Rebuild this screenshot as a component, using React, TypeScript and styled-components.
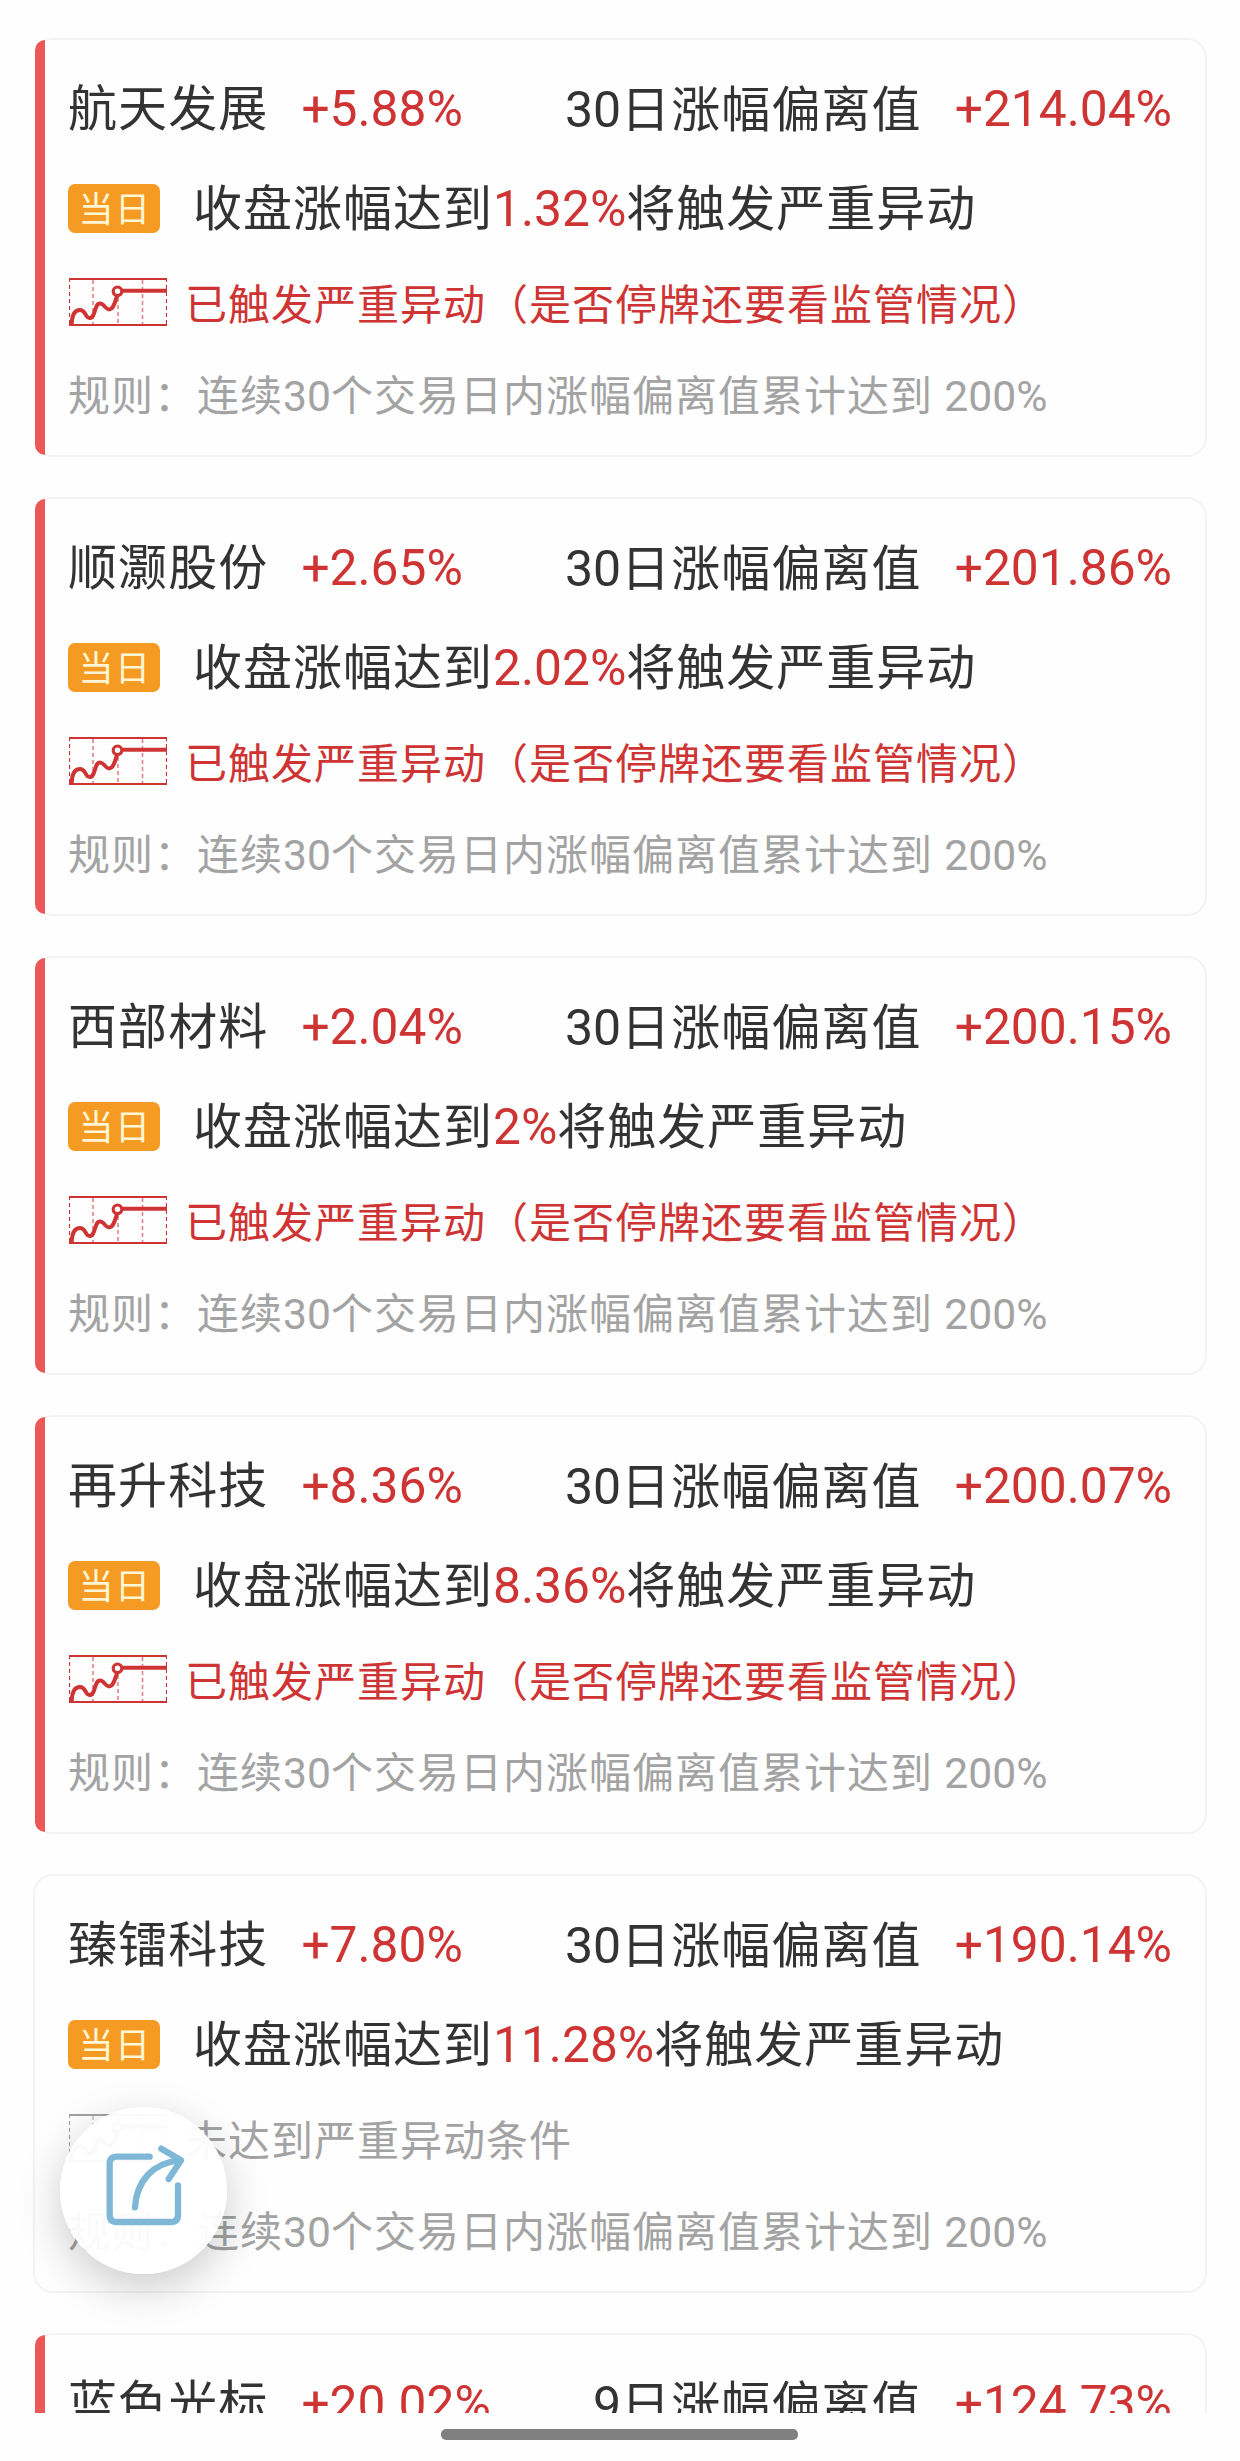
import React from "react";
import styled, { createGlobalStyle } from "styled-components";

const GlobalStyle = createGlobalStyle`
  * { box-sizing: border-box; }
  body {
    margin: 0;
    background: #fefefe;
    font-family: Roboto, "Noto Sans CJK SC", sans-serif;
    color: #333;
  }
`;

const RED = "#cf3434";
const GREY = "#a3a3a3";

const Screen = styled.main`
  position: relative;
  height: 2461px;
  overflow: hidden;
  display: flex;
  flex-direction: column;
  background: #fefefe;
`;

const List = styled.div`
  height: 2413px;
  flex: none;
  overflow: hidden;
  padding: 38px 33px 0;
  display: flex;
  flex-direction: column;
  gap: 40px;
`;

const Card = styled.section<{ $alert: boolean }>`
  position: relative;
  flex: none;
  height: 419px;
  padding: 18px 33px 0;
  border: 2px solid #f3f3f3;
  border-radius: 20px;
  ${(p) => p.$alert && `
    border-left-color: transparent;
    &::before {
      content: "";
      position: absolute;
      left: 0;
      top: 0;
      bottom: 0;
      width: 10px;
      border-radius: 10px 0 0 10px;
      background: #ec5858;
    }
  `}
`;

const Row = styled.div<{ $h: number }>`
  display: flex;
  align-items: center;
  height: ${(p) => p.$h}px;
  white-space: nowrap;
`;

const Title = styled.span`
  padding-top: 4px;
  font-size: 49px;
  letter-spacing: 1.1px;
  line-height: 60px;
`;

const Count = styled.span`
  font-size: 50px;
  letter-spacing: 0;
`;

const Figure = styled.span`
  padding-top: 2px;
  font-size: 49.7px;
  line-height: 60px;
  color: ${RED};
`;

const Change = styled(Figure)`
  margin-left: 33px;
`;

const Deviation = styled.div`
  margin-left: auto;
  display: flex;
  align-items: center;
  gap: 33px;
`;

const Badge = styled.span`
  display: flex;
  align-items: center;
  justify-content: center;
  width: 92px;
  height: 49px;
  border-radius: 7px;
  background: #f59a23;
  color: #fff6d6;
  font-size: 35px;
  letter-spacing: 1.5px;
  line-height: 49px;
  padding: 4px 0 0 2px;
`;

const Trigger = styled.span`
  padding-top: 3px;
  margin-left: 33px;
  font-size: 49px;
  letter-spacing: 1px;
  line-height: 60px;
  em {
    font-style: normal;
    font-size: 49.7px;
    letter-spacing: 0;
    color: ${RED};
  }
`;

const Status = styled.span<{ $alert: boolean }>`
  padding-top: 5px;
  margin-left: 18px;
  font-size: 42px;
  letter-spacing: 1px;
  line-height: 52px;
  color: ${(p) => (p.$alert ? RED : GREY)};
`;

const Rule = styled.span`
  padding-top: 2px;
  font-size: 42px;
  letter-spacing: 1px;
  line-height: 52px;
  color: ${GREY};
  b {
    font-weight: 400;
    font-size: 42.6px;
    letter-spacing: 0;
  }
`;

const ChartSvg = styled.svg`
  flex: none;
  width: 98px;
  height: 48px;
  margin: 0 0 2px 1px;
`;

const ShareButton = styled.button`
  position: absolute;
  left: 60px;
  top: 2107px;
  width: 167px;
  height: 167px;
  padding: 0 2px 2px 0;
  border: 0;
  border-radius: 50%;
  background: rgba(255, 255, 255, 0.95);
  box-shadow: 0 14px 44px rgba(0, 0, 0, 0.2);
  display: flex;
  align-items: center;
  justify-content: center;
`;

const ShareSvg = styled.svg`
  width: 80px;
  height: 80px;
  overflow: visible;
`;

const HomeIndicator = styled.div`
  flex: none;
  align-self: center;
  width: 357px;
  height: 11px;
  margin: 16px 1px 0 0;
  border-radius: 5px;
  background: #808080;
`;

function TrendChart({ color }: { color: string }) {
  return (
    <ChartSvg viewBox="0 0 98 48" fill="none" stroke={color}>
      <path d="M0 1H98M0 47H98" strokeWidth="2" />
      <path d="M.5 0V48M97.5 0V48" strokeWidth="1.2" strokeDasharray="4 3" />
      <path d="M24 2V46M49 20V46M73.5 2V46" strokeWidth="1.6" strokeDasharray="4 3" opacity="0.6" />
      <path
        d="M2.7 46C3 37 6 32 11 32C17 32 16 40 20.500 40C27 40 25 25.500 31 25.500C35.500 25.500 36 31.500 40 31.500C44.500 31.500 46 24 48 18"
        strokeWidth="4"
      />
      <circle cx="48.500" cy="13.300" r="4.300" strokeWidth="3.200" />
      <path d="M53 12.700H98" strokeWidth="4" />
    </ChartSvg>
  );
}

function ShareIcon() {
  return (
    <ShareSvg viewBox="250 210 240 240" fill="none" stroke="#7fb8d6" strokeWidth="19" strokeLinecap="round" strokeLinejoin="round">
      <path d="M390 230H292Q270 230 270 252V404Q270 426 292 426H453Q475 426 475 404V316" />
      <path d="M346 382C351 301 400 249 480 241" />
      <path d="M425 206L484 241L447 297" />
    </ShareSvg>
  );
}

interface Stock {
  name: string;
  change: string;
  days: number;
  deviation: string;
  trigger: string;
  alert: boolean;
}

const stocks: Stock[] = [
  { name: "航天发展", change: "+5.88%", days: 30, deviation: "+214.04%", trigger: "1.32%", alert: true },
  { name: "顺灏股份", change: "+2.65%", days: 30, deviation: "+201.86%", trigger: "2.02%", alert: true },
  { name: "西部材料", change: "+2.04%", days: 30, deviation: "+200.15%", trigger: "2%", alert: true },
  { name: "再升科技", change: "+8.36%", days: 30, deviation: "+200.07%", trigger: "8.36%", alert: true },
  { name: "臻镭科技", change: "+7.80%", days: 30, deviation: "+190.14%", trigger: "11.28%", alert: false },
  { name: "蓝色光标", change: "+20.02%", days: 9, deviation: "+124.73%", trigger: "", alert: true },
];

function StockCard({ stock }: { stock: Stock }) {
  return (
    <Card $alert={stock.alert}>
      <Row $h={100}>
        <Title>{stock.name}</Title>
        <Change>{stock.change}</Change>
        <Deviation>
          <Title>
            <Count>{stock.days}</Count>日涨幅偏离值
          </Title>
          <Figure>{stock.deviation}</Figure>
        </Deviation>
      </Row>
      {stock.trigger && (
        <>
          <Row $h={100}>
            <Badge>当日</Badge>
            <Trigger>
              收盘涨幅达到<em>{stock.trigger}</em>将触发严重异动
            </Trigger>
          </Row>
          <Row $h={90}>
            <TrendChart color={stock.alert ? RED : GREY} />
            <Status $alert={stock.alert}>
              {stock.alert ? "已触发严重异动（是否停牌还要看监管情况）" : "未达到严重异动条件"}
            </Status>
          </Row>
          <Row $h={94}>
            <Rule>
              规则：连续<b>30</b>个交易日内涨幅偏离值累计达到 <b>200%</b>
            </Rule>
          </Row>
        </>
      )}
    </Card>
  );
}

export default function App() {
  return (
    <Screen>
      <GlobalStyle />
      <List>
        {stocks.map((s) => (
          <StockCard key={s.name} stock={s} />
        ))}
      </List>
      <HomeIndicator />
      <ShareButton aria-label="分享">
        <ShareIcon />
      </ShareButton>
    </Screen>
  );
}
